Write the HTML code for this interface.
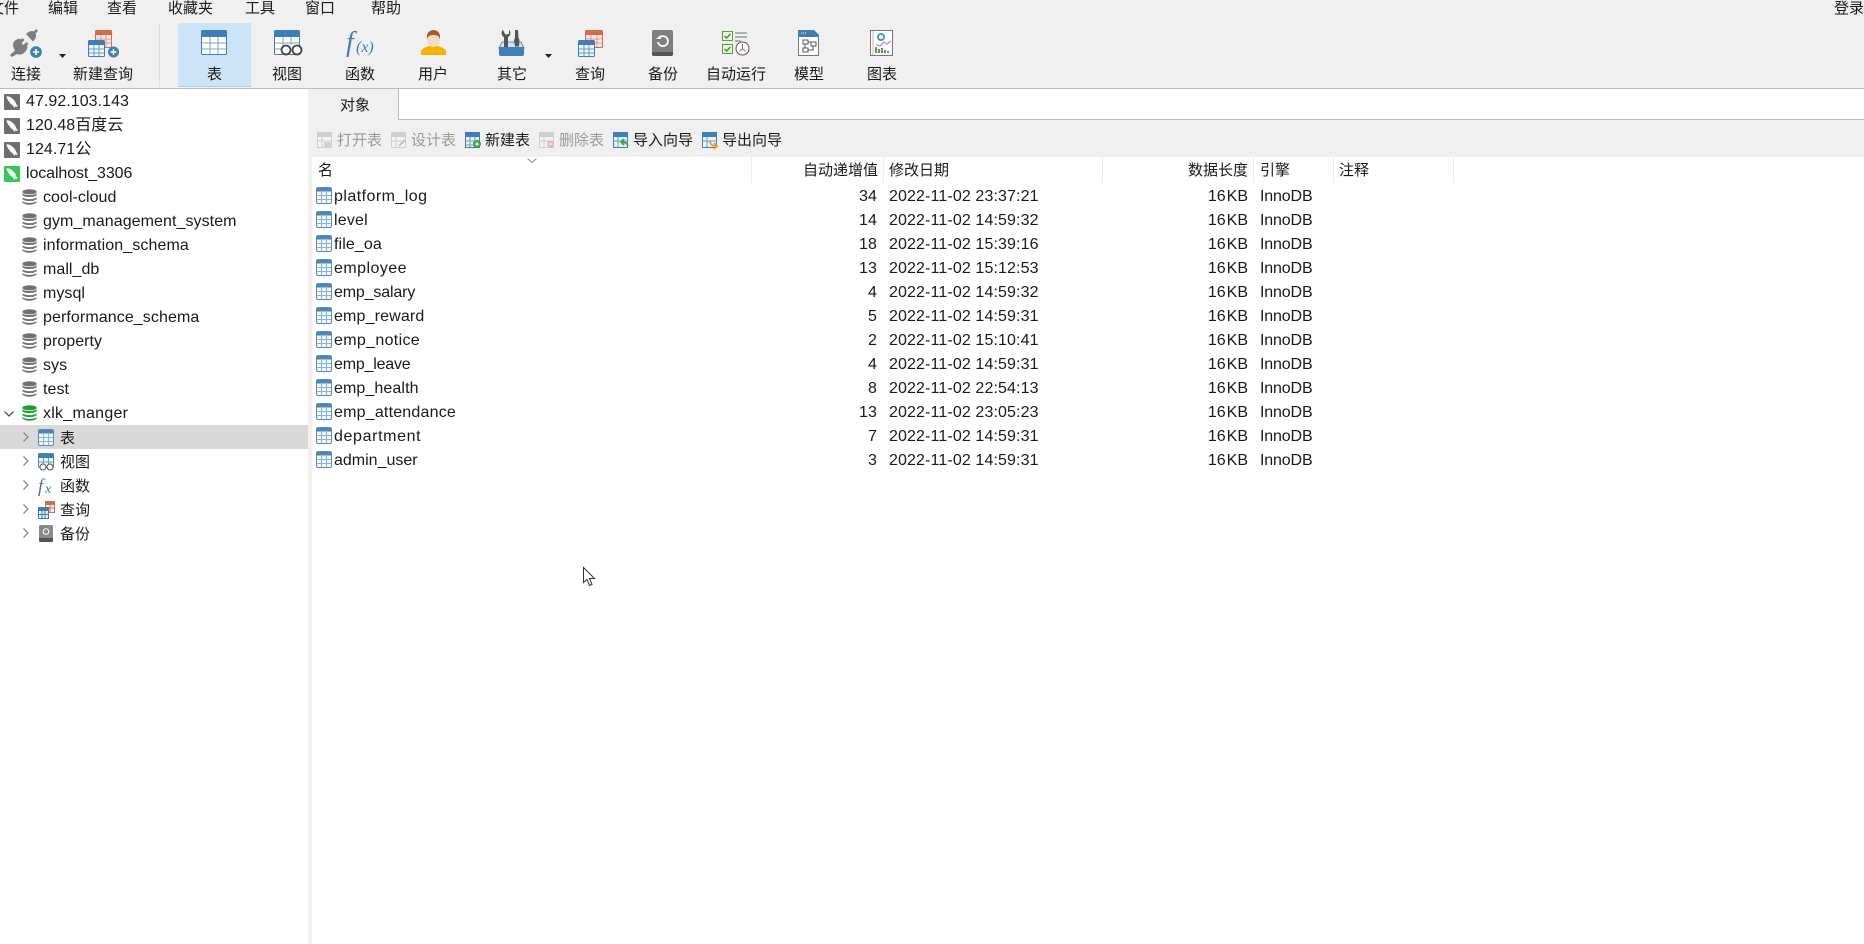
<!DOCTYPE html>
<html><head><meta charset="utf-8"><style>
html,body{margin:0;padding:0;background:#fff;overflow:hidden}
#p{position:relative;width:1864px;height:944px;overflow:hidden;background:#fff;font-family:"Liberation Sans","Noto Sans CJK SC",sans-serif;font-size:15px;color:#1a1a1a}
.t{position:absolute;height:24px;line-height:24px;white-space:nowrap}
.c{font-family:"Noto Sans CJK SC","Liberation Sans",sans-serif;font-size:15px}
.n{font-size:16px;letter-spacing:.05px;margin-top:1px}
.d{font-size:16px;margin-top:1px;letter-spacing:.12px}
.k{font-size:16px;margin-top:1px;word-spacing:-3.5px}
.e{font-size:16px;margin-top:1px;letter-spacing:-.15px}
.b{position:absolute}
svg.i{position:absolute;overflow:visible}
.g{color:#9a9a9a}
</style></head><body><div id="p">
<svg width="0" height="0" style="position:absolute"><defs>
<symbol id="tb" viewBox="0 0 16 17"><rect x=".5" y=".5" width="15" height="16" rx="1.500" fill="#f2f7fb" stroke="#5a8fbc"/><path d="M1 4.500V2a1 1 0 0 1 1-1h12a1 1 0 0 1 1 1v2.500z" fill="#4a86b8"/><path d="M1 8.500h14M1 12.500h14M5.500 5v11M10.500 5v11" stroke="#8db3d3" fill="none"/></symbol>
<symbol id="db" viewBox="0 0 15 16"><ellipse cx="7.500" cy="2.800" rx="7.200" ry="2.600" fill="#707070"/><path d="M.3 4.300C2 6.700 13 6.700 14.700 4.300V6C13 8.700 2 8.700.3 6zM.3 8.300C2 10.800 13 10.800 14.700 8.300V10C13 12.700 2 12.700.3 10zM.3 12C2 14.500 13 14.500 14.700 12V13.300C13 16.500 2 16.500.3 13.300z" fill="#707070"/></symbol>
<symbol id="dbg" viewBox="0 0 15 16"><ellipse cx="7.500" cy="2.800" rx="7.200" ry="2.600" fill="#1f9d35"/><path d="M.3 4.300C2 6.700 13 6.700 14.700 4.300V6C13 8.700 2 8.700.3 6zM.3 8.300C2 10.800 13 10.800 14.700 8.300V10C13 12.700 2 12.700.3 10zM.3 12C2 14.500 13 14.500 14.700 12V13.300C13 16.500 2 16.500.3 13.300z" fill="#1f9d35"/></symbol>
<symbol id="sv" viewBox="0 0 16 16"><rect width="16" height="16" rx="1" fill="currentColor"/><path d="M2.500 2.500C5 2 8 3.500 9.500 6l1 .5c1 1.500 1.500 3.500 3.500 6.500-1.500-.5-2-.5-3-.5l-.5 1.500-1.500-2.500C7 10.500 6 9 5 7.500 4 6 3 5 2.500 2.500z" fill="#fff"/></symbol>
<symbol id="ch" viewBox="0 0 8 12"><path d="M1.500 1.500 6 6l-4.500 4.500" fill="none" stroke="#8a8a8a" stroke-width="1.300"/></symbol>
</defs></svg>

<!-- top chrome -->
<div class="b" style="left:0;top:0;width:1864px;height:88px;background:#f0f0f0"></div>
<div class="b" style="left:0;top:88px;width:1864px;height:1px;background:#bdbdbd"></div>
<div class="t c" style="left:-11px;top:-4px">文件</div>
<div class="t c" style="left:48px;top:-4px">编辑</div>
<div class="t c" style="left:107px;top:-4px">查看</div>
<div class="t c" style="left:168px;top:-4px">收藏夹</div>
<div class="t c" style="left:245px;top:-4px">工具</div>
<div class="t c" style="left:305px;top:-4px">窗口</div>
<div class="t c" style="left:371px;top:-4px">帮助</div>
<div class="t c" style="left:1834px;top:-4px">登录</div>

<div class="b" style="left:159px;top:24px;width:1px;height:63px;background:#dcdcdc"></div>
<div class="b" style="left:178px;top:23px;width:73px;height:64px;background:#cce4f7;border-bottom:1px solid #a9cfe9;box-sizing:border-box"></div>

<div class="t c" style="left:11px;top:62px">连接</div>
<div class="t c" style="left:73px;top:62px">新建查询</div>
<div class="t c" style="left:207px;top:62px">表</div>
<div class="t c" style="left:272px;top:62px">视图</div>
<div class="t c" style="left:345px;top:62px">函数</div>
<div class="t c" style="left:418px;top:62px">用户</div>
<div class="t c" style="left:497px;top:62px">其它</div>
<div class="t c" style="left:575px;top:62px">查询</div>
<div class="t c" style="left:648px;top:62px">备份</div>
<div class="t c" style="left:706px;top:62px">自动运行</div>
<div class="t c" style="left:794px;top:62px">模型</div>
<div class="t c" style="left:867px;top:62px">图表</div>

<!-- connect icon -->
<svg class="i" style="left:10px;top:29px" width="32" height="30" viewBox="0 0 32 30"><path d="M4 12.500C8 9 10 9.500 11 10.500l1.500-1.500 2 2-3 3 2 2 3-3 2 2-1.500 1.500c1 1.500.5 4-3 7.500-2.500 2-5.500 2-7 1L2 28l-2-2 5-4.500C3.500 19 2 16 4 12.500z" fill="#7d7d7d"/><path d="M16 5c3-3 6-3.500 8-2.500L26 0l2 2-2.500 2.500c1.200 2 .5 5-2.500 8z" fill="#7d7d7d"/><circle cx="26" cy="23" r="5.800" fill="#3f7fb5"/><path d="M23 23h6M26 20v6" stroke="#fff" stroke-width="1.600"/></svg>
<svg class="i" style="left:59px;top:54px" width="7" height="4" viewBox="0 0 7 4"><path d="M0 0h7L3.500 4z" fill="#222"/></svg>
<!-- new query icon -->
<svg class="i" style="left:88px;top:30px" width="32" height="29" viewBox="0 0 32 29"><rect x="7.500" y=".5" width="16" height="17" rx="1" fill="#fbeee9" stroke="#d9694d"/><path d="M8 1h15v4H8z" fill="#d9694d"/><path d="M8 9h15M8 13h15M13 5v12M18 5v12" stroke="#e39a86"/><rect x=".5" y="10.500" width="16" height="16" rx="1" fill="#eef5fb" stroke="#3f7fb5"/><path d="M1 11h15v4H1z" fill="#3f7fb5"/><path d="M1 19h15M1 23h15M6 15v11M11 15v11" stroke="#6c9dc6"/><circle cx="25.500" cy="22" r="5.500" fill="#3f7fb5"/><path d="M22.500 22h6M25.500 19v6" stroke="#fff" stroke-width="1.500"/></svg>
<!-- table -->
<svg class="i" style="left:201px;top:30px" width="26" height="25" viewBox="0 0 26 25"><rect x=".5" y=".5" width="25" height="24" rx="1" fill="#fff" stroke="#3f7fb5"/><path d="M1 1h24v6H1z" fill="#3f7fb5"/><path d="M1 13h24M1 19h24M9 7v17M17 7v17" stroke="#79a7cd"/></svg>
<!-- view -->
<svg class="i" style="left:274px;top:30px" width="29" height="26" viewBox="0 0 29 26"><rect x=".5" y=".5" width="25" height="24" rx="1" fill="#fff" stroke="#3f7fb5"/><path d="M1 1h24v6H1z" fill="#3f7fb5"/><path d="M1 13h24M1 19h8M9 7v12M17 7v8" stroke="#79a7cd"/><circle cx="12" cy="20" r="4.500" fill="#fff" stroke="#444" stroke-width="1.800"/><circle cx="23" cy="20" r="4.500" fill="#fff" stroke="#444" stroke-width="1.800"/></svg>
<!-- fx -->
<svg class="i" style="left:345px;top:28px" width="32" height="30" viewBox="0 0 32 30"><text x="1" y="23" font-family="Liberation Serif" font-style="italic" font-size="28" fill="#3f7fb5">f</text><text x="11" y="24" font-family="Liberation Serif" font-style="italic" font-size="16" fill="#3f7fb5">(x)</text></svg>
<!-- user -->
<svg class="i" style="left:421px;top:30px" width="25" height="26" viewBox="0 0 25 26"><path d="M0 25v-4c1-3 5-4 8-5h9c3 1 7 2 8 5v4z" fill="#f2b400"/><ellipse cx="12.500" cy="9" rx="6.500" ry="8" fill="#f7d9c4"/><path d="M6 9C5 3 9 0 12.500 0S20 3 19 9c-1-3-3-4-6.500-4S7 6 6 9z" fill="#a8582a"/></svg>
<!-- other -->
<svg class="i" style="left:498px;top:29px" width="27" height="27" viewBox="0 0 27 27"><path d="M4 13h19l3 6H1z" fill="#cfe2f1" stroke="#5a95c4"/><path d="M1 18h25v7a2 2 0 0 1-2 2H3a2 2 0 0 1-2-2z" fill="#3f7fb5"/><path d="M5 1C3 2 3 7 6 8v10h4V8c3-1 3-6 1-7v4H9L8.500 6 7 5z" fill="#555"/><path d="M17 1h3l.5 8 1 2-.5 6.500h-4L16 11l1-2z" fill="#555"/></svg>
<svg class="i" style="left:545px;top:54px" width="7" height="4" viewBox="0 0 7 4"><path d="M0 0h7L3.500 4z" fill="#222"/></svg>
<!-- query -->
<svg class="i" style="left:578px;top:30px" width="25" height="27" viewBox="0 0 25 27"><rect x="7.500" y=".5" width="17" height="17" rx="1" fill="#fbeee9" stroke="#d9694d"/><path d="M8 1h16v4H8z" fill="#d9694d"/><path d="M8 9h16M8 13h16M13 5v12M19 5v12" stroke="#e39a86"/><rect x=".5" y="10.500" width="16" height="16" rx="1" fill="#eef5fb" stroke="#3f7fb5"/><path d="M1 11h15v4H1z" fill="#3f7fb5"/><path d="M1 19h15M1 23h15M6 15v11M11 15v11" stroke="#6c9dc6"/></svg>
<!-- backup -->
<svg class="i" style="left:652px;top:30px" width="21" height="26" viewBox="0 0 21 26"><rect width="21" height="26" rx="2" fill="#7f7f7f"/><path d="M0 22h21v2a2 2 0 0 1-2 2H2a2 2 0 0 1-2-2z" fill="#555"/><path d="M7 8a5 5 0 1 1-1 4" fill="none" stroke="#fff" stroke-width="1.800"/><path d="M4 9h5v-4z" fill="#fff"/></svg>
<!-- automation -->
<svg class="i" style="left:722px;top:31px" width="28" height="25" viewBox="0 0 28 25"><rect x=".5" y=".5" width="10" height="9" fill="#eaf5e4" stroke="#5c9e3c"/><rect x=".5" y="13.500" width="10" height="9" fill="#eaf5e4" stroke="#5c9e3c"/><path d="M2.500 5l2 2 4-4M2.500 18l2 2 4-4" fill="none" stroke="#4a8f2c" stroke-width="1.500"/><path d="M13 2h12M13 6h12M13 10h6" stroke="#9a9a9a" stroke-width="1.600"/><circle cx="20.500" cy="17.500" r="6.500" fill="#fff" stroke="#555"/><path d="M20.500 13v5l3 2M20.500 18l-3 2" fill="none" stroke="#c05040"/></svg>
<!-- model -->
<svg class="i" style="left:798px;top:30px" width="21" height="26" viewBox="0 0 21 26"><path d="M.5.500h15l5 5v20H.5z" fill="#fff" stroke="#777"/><path d="M0 0h16l5 5v2H0z" fill="#3f7fb5"/><path d="M3 3h1M5 3h1M7 3h1" stroke="#fff"/><path d="M5 10h5v4H5zM13 12h5v4h-5zM5 18h5v4H5zM10 12h3M7 14v4M15 16v4h-5" fill="none" stroke="#555"/></svg>
<!-- chart -->
<svg class="i" style="left:870px;top:30px" width="23" height="26" viewBox="0 0 23 26"><rect x=".5" y=".5" width="22" height="25" fill="#fff" stroke="#777"/><path d="M3 1v24" stroke="#bbb"/><circle cx="11" cy="7" r="3" fill="none" stroke="#3f9bd0" stroke-width="2"/><path d="M6 15l4 1 4-4 3 2 4-3" fill="none" stroke="#c58ad0" stroke-width="1.300"/><path d="M6 23v-6M9 23v-4M12 23v-5M15 23v-3M18 23v-2" stroke="#4fa04a" stroke-width="2"/></svg>

<!-- sidebar -->
<div class="b" style="left:308px;top:89px;width:4px;height:855px;background:#f0f0f0"></div>
<div class="b" style="left:0;top:425px;width:308px;height:24px;background:#d9d9d9"></div>

<svg class="i" style="left:4px;top:94px;color:#6f6f6f" width="16" height="16"><use href="#sv"/></svg>
<svg class="i" style="left:4px;top:118px;color:#6f6f6f" width="16" height="16"><use href="#sv"/></svg>
<svg class="i" style="left:4px;top:142px;color:#6f6f6f" width="16" height="16"><use href="#sv"/></svg>
<svg class="i" style="left:4px;top:166px;color:#39c659" width="16" height="16"><use href="#sv"/></svg>
<div class="t n" style="left:26px;top:89px">47.92.103.143</div>
<div class="t n" style="left:26px;top:113px">120.48百度云</div>
<div class="t n" style="left:26px;top:137px">124.71公</div>
<div class="t n" style="left:26px;top:161px;letter-spacing:-.1px">localhost_3306</div>

<svg class="i" style="left:22px;top:189px" width="15" height="16"><use href="#db"/></svg>
<svg class="i" style="left:22px;top:213px" width="15" height="16"><use href="#db"/></svg>
<svg class="i" style="left:22px;top:237px" width="15" height="16"><use href="#db"/></svg>
<svg class="i" style="left:22px;top:261px" width="15" height="16"><use href="#db"/></svg>
<svg class="i" style="left:22px;top:285px" width="15" height="16"><use href="#db"/></svg>
<svg class="i" style="left:22px;top:309px" width="15" height="16"><use href="#db"/></svg>
<svg class="i" style="left:22px;top:333px" width="15" height="16"><use href="#db"/></svg>
<svg class="i" style="left:22px;top:357px" width="15" height="16"><use href="#db"/></svg>
<svg class="i" style="left:22px;top:381px" width="15" height="16"><use href="#db"/></svg>
<svg class="i" style="left:22px;top:405px" width="15" height="16"><use href="#dbg"/></svg>
<div class="t n" style="left:43px;top:185px">cool-cloud</div>
<div class="t n" style="left:43px;top:209px;letter-spacing:.07px">gym_management_system</div>
<div class="t n" style="left:43px;top:233px;letter-spacing:.1px">information_schema</div>
<div class="t n" style="left:43px;top:257px">mall_db</div>
<div class="t n" style="left:43px;top:281px">mysql</div>
<div class="t n" style="left:43px;top:305px;letter-spacing:.09px">performance_schema</div>
<div class="t n" style="left:43px;top:329px">property</div>
<div class="t n" style="left:43px;top:353px">sys</div>
<div class="t n" style="left:43px;top:377px">test</div>
<div class="t n" style="left:43px;top:401px;letter-spacing:.25px">xlk_manger</div>
<svg class="i" style="left:3px;top:410px" width="12" height="8" viewBox="0 0 12 8"><path d="M1.500 1.500 6 6l4.500-4.500" fill="none" stroke="#555" stroke-width="1.300"/></svg>

<svg class="i" style="left:22px;top:431px" width="8" height="12"><use href="#ch"/></svg>
<svg class="i" style="left:22px;top:455px" width="8" height="12"><use href="#ch"/></svg>
<svg class="i" style="left:22px;top:479px" width="8" height="12"><use href="#ch"/></svg>
<svg class="i" style="left:22px;top:503px" width="8" height="12"><use href="#ch"/></svg>
<svg class="i" style="left:22px;top:527px" width="8" height="12"><use href="#ch"/></svg>

<svg class="i" style="left:38px;top:429px" width="16" height="17"><use href="#tb"/></svg>
<svg class="i" style="left:38px;top:453px" width="16" height="18" viewBox="0 0 16 18"><rect x=".5" y=".5" width="15" height="14" rx="1" fill="#eaf2fa" stroke="#4f86b5"/><path d="M1 1h14v4H1z" fill="#3f7fb5"/><path d="M1 9h14M5.500 5v8M10.500 5v8" stroke="#6c9dc6"/><circle cx="5" cy="14" r="3" fill="#fff" stroke="#555"/><circle cx="12" cy="14" r="3" fill="#fff" stroke="#555"/></svg>
<svg class="i" style="left:38px;top:476px" width="18" height="20" viewBox="0 0 18 20"><text x="0" y="16" font-family="Liberation Serif" font-style="italic" font-size="19" fill="#3f7fb5">f</text><text x="7" y="17" font-family="Liberation Serif" font-style="italic" font-size="14" fill="#3f7fb5">x</text></svg>
<svg class="i" style="left:38px;top:501px" width="17" height="18" viewBox="0 0 17 18"><rect x="7.500" y=".5" width="9" height="11" fill="#fbeee9" stroke="#d9694d"/><path d="M8 1h8v3H8z" fill="#d9694d"/><path d="M8 7h8M12 4v7" stroke="#d9694d"/><rect x=".5" y="6.500" width="10" height="11" fill="#e9f1f9" stroke="#3f7fb5"/><path d="M1 7h9v3H1z" fill="#3f7fb5"/><path d="M1 13.500h9M4 10v7M7 10v7" stroke="#3f7fb5"/></svg>
<svg class="i" style="left:39px;top:525px" width="14" height="17" viewBox="0 0 14 17"><rect width="14" height="17" rx="1.500" fill="#8a8a8a"/><path d="M0 13h14v2.500a1.500 1.500 0 0 1-1.500 1.500h-11A1.500 1.500 0 0 1 0 15.500z" fill="#555"/><circle cx="7" cy="6.500" r="2.800" fill="none" stroke="#fff"/></svg>
<div class="t c" style="left:60px;top:426px">表</div>
<div class="t c" style="left:60px;top:450px">视图</div>
<div class="t c" style="left:60px;top:474px">函数</div>
<div class="t c" style="left:60px;top:498px">查询</div>
<div class="t c" style="left:60px;top:522px">备份</div>

<!-- tab bar -->
<div class="b" style="left:312px;top:89px;width:1552px;height:30px;background:#fff"></div>
<div class="b" style="left:312px;top:89px;width:86px;height:31px;background:#f0f0f0"></div>
<div class="b" style="left:398px;top:89px;width:1px;height:30px;background:#bdbdbd"></div>
<div class="b" style="left:398px;top:119px;width:1466px;height:1px;background:#bdbdbd"></div>
<div class="t c" style="left:340px;top:93px">对象</div>

<!-- object toolbar -->
<div class="b" style="left:312px;top:120px;width:1552px;height:37px;background:#f0f0f0"></div>
<svg class="i" style="left:317px;top:132px" width="15" height="16" viewBox="0 0 15 16"><rect x=".5" y=".5" width="14" height="15" fill="#f4f4f4" stroke="#cfcfcf"/><path d="M1 1h13v4H1z" fill="#cfcfcf"/><path d="M1 9h13M5 5v10" stroke="#cfcfcf"/><path d="M7 10h8v6H7z" fill="#d2d2d2"/></svg>
<svg class="i" style="left:391px;top:132px" width="15" height="16" viewBox="0 0 15 16"><rect x=".5" y=".5" width="14" height="15" fill="#f4f4f4" stroke="#cfcfcf"/><path d="M1 1h13v4H1z" fill="#cfcfcf"/><path d="M1 9h13M5 5v10" stroke="#cfcfcf"/><path d="M8 14l6-6" stroke="#c4c4c4" stroke-width="2"/></svg>
<svg class="i" style="left:465px;top:132px" width="16" height="16" viewBox="0 0 16 16"><rect x=".5" y=".5" width="14" height="15" fill="#eaf2fa" stroke="#3f7fb5"/><path d="M1 1h13v4H1z" fill="#3f7fb5"/><path d="M1 9h13M1 13h13M5 5v10M10 5v10" stroke="#6c9dc6"/><circle cx="12" cy="12" r="4" fill="#3fa535"/><path d="M10 12h4M12 10v4" stroke="#fff"/></svg>
<svg class="i" style="left:539px;top:132px" width="16" height="16" viewBox="0 0 16 16"><rect x=".5" y=".5" width="14" height="15" fill="#f4f4f4" stroke="#cfcfcf"/><path d="M1 1h13v4H1z" fill="#cfcfcf"/><path d="M1 9h13M5 5v10" stroke="#cfcfcf"/><circle cx="11.500" cy="12" r="3.500" fill="#e3b8b8"/><path d="M9.500 12h4" stroke="#fff"/></svg>
<svg class="i" style="left:613px;top:132px" width="16" height="16" viewBox="0 0 16 16"><rect x=".5" y=".5" width="14" height="15" fill="#eaf2fa" stroke="#3f7fb5"/><path d="M1 1h13v4H1z" fill="#3f7fb5"/><path d="M1 9h13M5 5v10" stroke="#6c9dc6"/><path d="M15 14c-1-3-3-4-6-4M11 7l-3 3 3 3" fill="none" stroke="#3fa535" stroke-width="1.800"/></svg>
<svg class="i" style="left:702px;top:132px" width="16" height="16" viewBox="0 0 16 16"><rect x=".5" y=".5" width="14" height="15" fill="#eaf2fa" stroke="#3f7fb5"/><path d="M1 1h13v4H1z" fill="#3f7fb5"/><path d="M1 9h13M5 5v10" stroke="#6c9dc6"/><path d="M8 9c0 3 2 5 6 5M12 11l3 3-3 3" fill="none" stroke="#ee9a1d" stroke-width="1.800"/></svg>
<div class="t c g" style="left:337px;top:128px">打开表</div>
<div class="t c g" style="left:411px;top:128px">设计表</div>
<div class="t c" style="left:485px;top:128px">新建表</div>
<div class="t c g" style="left:559px;top:128px">删除表</div>
<div class="t c" style="left:633px;top:128px">导入向导</div>
<div class="t c" style="left:722px;top:128px">导出向导</div>

<!-- table header -->
<div class="b" style="left:751px;top:157px;width:1px;height:26px;background:#ececec"></div>
<div class="b" style="left:883px;top:157px;width:1px;height:26px;background:#ececec"></div>
<div class="b" style="left:1102px;top:157px;width:1px;height:26px;background:#ececec"></div>
<div class="b" style="left:1253px;top:157px;width:1px;height:26px;background:#ececec"></div>
<div class="b" style="left:1333px;top:157px;width:1px;height:26px;background:#ececec"></div>
<div class="b" style="left:1453px;top:157px;width:1px;height:26px;background:#ececec"></div>
<svg class="i" style="left:527px;top:158px" width="10" height="5" viewBox="0 0 10 5"><path d="M.5.500 5 4.500 9.500.500" fill="none" stroke="#888"/></svg>
<div class="t c" style="left:318px;top:158px">名</div>
<div class="t c" style="right:986px;top:158px">自动递增值</div>
<div class="t c" style="left:889px;top:158px">修改日期</div>
<div class="t c" style="right:616px;top:158px">数据长度</div>
<div class="t c" style="left:1260px;top:158px">引擎</div>
<div class="t c" style="left:1339px;top:158px">注释</div>

<!-- rows -->
<svg class="i" style="left:316px;top:187px" width="16" height="17"><use href="#tb"/></svg><div class="t n" style="left:334px;top:184px;letter-spacing:.45px">platform_log</div><div class="t d" style="right:987px;top:184px">34</div><div class="t d" style="left:889px;top:184px">2022-11-02 23:37:21</div><div class="t k" style="right:616px;top:184px">16 KB</div><div class="t e" style="left:1260px;top:184px">InnoDB</div>
<svg class="i" style="left:316px;top:211px" width="16" height="17"><use href="#tb"/></svg><div class="t n" style="left:334px;top:208px;letter-spacing:.2px">level</div><div class="t d" style="right:987px;top:208px">14</div><div class="t d" style="left:889px;top:208px">2022-11-02 14:59:32</div><div class="t k" style="right:616px;top:208px">16 KB</div><div class="t e" style="left:1260px;top:208px">InnoDB</div>
<svg class="i" style="left:316px;top:235px" width="16" height="17"><use href="#tb"/></svg><div class="t n" style="left:334px;top:232px;letter-spacing:.1px">file_oa</div><div class="t d" style="right:987px;top:232px">18</div><div class="t d" style="left:889px;top:232px">2022-11-02 15:39:16</div><div class="t k" style="right:616px;top:232px">16 KB</div><div class="t e" style="left:1260px;top:232px">InnoDB</div>
<svg class="i" style="left:316px;top:259px" width="16" height="17"><use href="#tb"/></svg><div class="t n" style="left:334px;top:256px;letter-spacing:.45px">employee</div><div class="t d" style="right:987px;top:256px">13</div><div class="t d" style="left:889px;top:256px">2022-11-02 15:12:53</div><div class="t k" style="right:616px;top:256px">16 KB</div><div class="t e" style="left:1260px;top:256px">InnoDB</div>
<svg class="i" style="left:316px;top:283px" width="16" height="17"><use href="#tb"/></svg><div class="t n" style="left:334px;top:280px;letter-spacing:-.15px">emp_salary</div><div class="t d" style="right:987px;top:280px">4</div><div class="t d" style="left:889px;top:280px">2022-11-02 14:59:32</div><div class="t k" style="right:616px;top:280px">16 KB</div><div class="t e" style="left:1260px;top:280px">InnoDB</div>
<svg class="i" style="left:316px;top:307px" width="16" height="17"><use href="#tb"/></svg><div class="t n" style="left:334px;top:304px;letter-spacing:.15px">emp_reward</div><div class="t d" style="right:987px;top:304px">5</div><div class="t d" style="left:889px;top:304px">2022-11-02 14:59:31</div><div class="t k" style="right:616px;top:304px">16 KB</div><div class="t e" style="left:1260px;top:304px">InnoDB</div>
<svg class="i" style="left:316px;top:331px" width="16" height="17"><use href="#tb"/></svg><div class="t n" style="left:334px;top:328px;letter-spacing:.33px">emp_notice</div><div class="t d" style="right:987px;top:328px">2</div><div class="t d" style="left:889px;top:328px">2022-11-02 15:10:41</div><div class="t k" style="right:616px;top:328px">16 KB</div><div class="t e" style="left:1260px;top:328px">InnoDB</div>
<svg class="i" style="left:316px;top:355px" width="16" height="17"><use href="#tb"/></svg><div class="t n" style="left:334px;top:352px;letter-spacing:-.2px">emp_leave</div><div class="t d" style="right:987px;top:352px">4</div><div class="t d" style="left:889px;top:352px">2022-11-02 14:59:31</div><div class="t k" style="right:616px;top:352px">16 KB</div><div class="t e" style="left:1260px;top:352px">InnoDB</div>
<svg class="i" style="left:316px;top:379px" width="16" height="17"><use href="#tb"/></svg><div class="t n" style="left:334px;top:376px;letter-spacing:.1px">emp_health</div><div class="t d" style="right:987px;top:376px">8</div><div class="t d" style="left:889px;top:376px">2022-11-02 22:54:13</div><div class="t k" style="right:616px;top:376px">16 KB</div><div class="t e" style="left:1260px;top:376px">InnoDB</div>
<svg class="i" style="left:316px;top:403px" width="16" height="17"><use href="#tb"/></svg><div class="t n" style="left:334px;top:400px;letter-spacing:.2px">emp_attendance</div><div class="t d" style="right:987px;top:400px">13</div><div class="t d" style="left:889px;top:400px">2022-11-02 23:05:23</div><div class="t k" style="right:616px;top:400px">16 KB</div><div class="t e" style="left:1260px;top:400px">InnoDB</div>
<svg class="i" style="left:316px;top:427px" width="16" height="17"><use href="#tb"/></svg><div class="t n" style="left:334px;top:424px;letter-spacing:.63px">department</div><div class="t d" style="right:987px;top:424px">7</div><div class="t d" style="left:889px;top:424px">2022-11-02 14:59:31</div><div class="t k" style="right:616px;top:424px">16 KB</div><div class="t e" style="left:1260px;top:424px">InnoDB</div>
<svg class="i" style="left:316px;top:451px" width="16" height="17"><use href="#tb"/></svg><div class="t n" style="left:334px;top:448px;letter-spacing:0">admin_user</div><div class="t d" style="right:987px;top:448px">3</div><div class="t d" style="left:889px;top:448px">2022-11-02 14:59:31</div><div class="t k" style="right:616px;top:448px">16 KB</div><div class="t e" style="left:1260px;top:448px">InnoDB</div>

<!-- cursor -->
<svg class="i" style="left:583px;top:567px" width="13" height="20" viewBox="0 0 13 20"><path d="M.5.500V15.500L4 12.500 6.500 18.500 9 17.500 6.500 11.500H11.500z" fill="#fff" stroke="#333"/></svg>
</div></body></html>
